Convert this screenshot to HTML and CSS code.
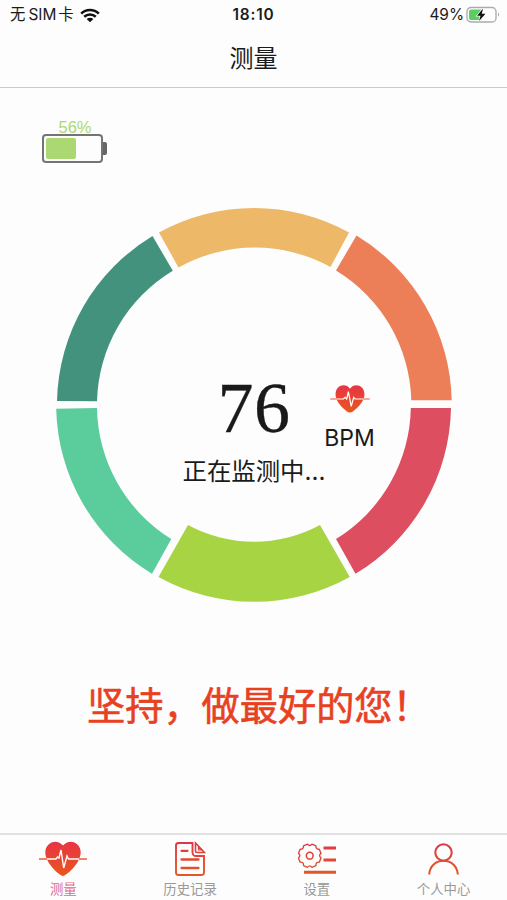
FILE: index.html
```html
<!DOCTYPE html>
<html lang="zh-CN">
<head>
    <meta charset="UTF-8">
    <meta name="viewport" content="width=device-width, initial-scale=1.0">
    <title>测量</title>
    <link rel="stylesheet" href="styles.css">
</head>
<body>
    <div class="status-bar">
        <div class="carrier">
            <span>无</span><span class="sim">SIM</span><span>卡</span>
            <svg class="wifi" width="20" height="15" viewBox="0 0 20 15">
                <path d="M1.2 5.6C6.1.8 13.9.8 18.8 5.6M4.2 8.8c3.3-3.1 8.3-3.1 11.6 0" fill="none" stroke="#111" stroke-width="2.6"/>
                <path d="M6.6 10.9c2-1.7 4.8-1.7 6.8 0L10 14.2z" fill="#111"/>
            </svg>
        </div>
        <div class="time">18:10</div>
        <div class="power">
            <span>49%</span>
            <svg width="34" height="18" viewBox="0 0 34 18">
                <rect x="1" y="1.5" width="29" height="14.5" rx="4" fill="#fff" stroke="#aaa" stroke-width="1.3"/>
                <path d="M32 6.7c1.5.6 1.5 3.2 0 3.8z" fill="#aaa"/>
                <path d="M5 3.5h10.500v10.500H5a2 2 0 0 1-2-2v-6.500a2 2 0 0 1 2-2z" fill="#5bcb62"/>
                <path d="M17 2.500L11 9.700h3.500l-1.500 5.200 6.500-7.200h-3.700z" fill="#111" stroke="#fff" stroke-width="1.4" paint-order="stroke"/>
            </svg>
        </div>
    </div>
    <header class="title">测量</header>

    <main>
        <div class="device-battery">
            <div class="battery-text">56%</div>
            <div class="battery">
                <div class="battery-body"><div class="battery-level" style="width: 56%"></div></div>
                <div class="battery-cap"></div>
            </div>
        </div>

        <div class="gauge">
            <svg class="ring" width="400" height="400" viewBox="54 204 400 400">
                <path fill="#edb868" d="M159 232.500A196.500 196.500 0 0 1 349 232.500L330.500 267A156.800 156.800 0 0 0 178.500 267.500Z"/>
                <path fill="#ec7f58" d="M356.500 235.500A197.500 197.500 0 0 1 451.700 400.300H411.300A156.800 156.800 0 0 0 336 270.500Z"/>
                <path fill="#dd4f60" d="M451 408A197.500 197.500 0 0 1 355.500 573.800L336 539A156.800 156.800 0 0 0 410.800 408Z"/>
                <path fill="#a7d443" d="M349.800 577A197.500 197.500 0 0 1 158.500 577L188 525A139 139 0 0 0 320 525Z"/>
                <path fill="#5bcc9b" d="M152 573.700A197.500 197.500 0 0 1 56.200 408.700L97 408A156.800 156.800 0 0 0 171.300 539Z"/>
                <path fill="#42927d" d="M57 401A197.500 197.500 0 0 1 152.500 236L172.800 270.800A156.800 156.800 0 0 0 97 401.200Z"/>
            </svg>
            <div class="readout">
                <div class="rate">
                    <div class="bpm-value">76</div>
                    <div class="bpm-unit">
                        <svg width="40" height="28" viewBox="0 0 48 34">
                            <path d="M24 33.500C20 33 7 22 6.500 12 6 0 19-3 24 4.500 29-3 42 0 41.500 12 41 22 28 33 24 33.500z" fill="url(#red)"/>
                            <path d="M6 17h10l2-2 2 2 2-9 3.500 18 3-11 1.500 2h12" fill="none" stroke="#fff" stroke-width="1.500"/>
                            <path d="M0 17h8m32 0h8" stroke="#ea5b35" stroke-width="1.500"/>
                        </svg>
                        <span>BPM</span>
                    </div>
                </div>
                <div class="state">正在监测中...</div>
            </div>
        </div>

        <div class="slogan">坚持，做最好的您！</div>
    </main>

    <nav class="tab-bar">
        <a class="tab active">
            <svg width="48" height="36" viewBox="0 0 48 36">
                <defs>
                    <linearGradient id="red" x1="0" y1="0" x2="0" y2="1">
                        <stop offset="0" stop-color="#e73545"/>
                        <stop offset="1" stop-color="#e9561d"/>
                    </linearGradient>
                    <linearGradient id="line" gradientUnits="userSpaceOnUse" x1="0" y1="0" x2="0" y2="36">
                        <stop offset="0" stop-color="#df3549"/>
                        <stop offset="1" stop-color="#e45b20"/>
                    </linearGradient>
                </defs>
                <path d="M24 35C20 34 7 23 6.300 12 6 1 18-3 24 4.500 30-3 42 1 41.700 12 41 23 28 34 24 35z" fill="url(#red)"/>
                <path d="M6 18h11l1.500-2 1.500 1 2-8 2.700 18 3.300-12 1.500 3h12" fill="none" stroke="#fff" stroke-width="1.400"/>
                <path d="M0 18h8m32 0h8" stroke="#ea5b35" stroke-width="1.500"/>
            </svg>
            <span>测量</span>
        </a>
        <a class="tab">
            <svg width="32" height="36" viewBox="0 0 32 36" fill="none" stroke="url(#line)" stroke-width="1.900">
                <path d="M18.500 2H4.500A2.500 2.500 0 0 0 2 4.500v27A2.500 2.500 0 0 0 4.500 34h23a2.500 2.500 0 0 0 2.500-2.500V15h-8a3.500 3.500 0 0 1-3.500-3.500z"/>
                <path d="M21.500 2V10q0 1.500 1.500 1.500H30.500z" stroke-width="1.600"/>
                <path d="M24.500 6v3h3z" stroke-width="1.200"/>
                <path d="M7.500 9.800h6M7.500 18.500h17M7.500 27h17" stroke-width="2.300" stroke-linecap="round"/>
            </svg>
            <span>历史记录</span>
        </a>
        <a class="tab">
            <svg width="38" height="36" viewBox="0 0 38 36" fill="none" stroke="url(#line)">
                <g transform="translate(-2.400 -.8) scale(1.130)">
                    <path stroke-width="1.200" stroke-linejoin="round" d="M10.500 3.500q2 2.400 4 0l3.500 1.500q-.2 3.300 3 3l1.500 3.700q-2.600 1.900 0 4L21 19.400q-3.200-.3-3 3L14.500 24q-2-2.500-4 0L7 22.400q.2-3.300-3-3l-1.500-3.700q2.600-2.100 0-4L4 8q3.200.3 3-3z"/>
                    <circle cx="12.500" cy="13.700" r="3" stroke-width="1.400"/>
                </g>
                <path d="M25.500 5.400h12.500v3H25.500zM25.500 17.500h12.500v3H25.500zM6 29.700H38v3H6z" fill="url(#line)" stroke="none"/>
            </svg>
            <span>设置</span>
        </a>
        <a class="tab">
            <svg width="32" height="36" viewBox="0 0 32 36" fill="none" stroke="url(#line)" stroke-width="2.100">
                <circle cx="15.500" cy="11.500" r="8.200"/>
                <path d="M1.200 33.500c1-18.300 27.600-18.300 28.600 0"/>
            </svg>
            <span>个人中心</span>
        </a>
    </nav>
</body>
</html>
```

FILE: styles.css
```css
* {
    box-sizing: border-box;
}
body {
    margin: 0;
    height: 900px;
    display: flex;
    flex-direction: column;
    overflow: hidden;
    background-color: #fdfdfd;
    color: #1a1a1a;
    font-family: Inter, "Noto Sans CJK SC", sans-serif;
}
svg {
    display: block;
}
.status-bar {
    height: 30px;
    padding: 0 7px 0 10px;
    display: grid;
    grid-template-columns: 1fr auto 1fr;
    align-items: center;
    font-size: 15.4px;
    line-height: 30px;
}
.carrier {
    display: flex;
    align-items: center;
}
.sim {
    margin: 0 2px 0 3px;
}
.wifi {
    margin-left: 6px;
}
.time {
    margin-right: 3px;
    font-weight: 600;
    letter-spacing: 0.8px;
}
.power {
    display: flex;
    justify-content: flex-end;
    align-items: center;
    gap: 2px;
}
.title {
    height: 58px;
    border-bottom: 1px solid #ccc;
    text-align: center;
    font-size: 24px;
    line-height: 57px;
}
main {
    flex: 1;
    display: flex;
    flex-direction: column;
}
.device-battery {
    margin: 31px 0 0 42px;
    width: 66px;
}
.battery-text {
    color: #abd873;
    font-size: 16.5px;
    line-height: 16px;
    height: 15px;
    font-family: "Liberation Sans", sans-serif;
    text-align: center;
}
.battery {
    display: flex;
    align-items: center;
}
.battery-body {
    width: 61px;
    height: 29px;
    padding: 2px;
    border: 2px solid #747474;
    border-radius: 4px;
}
.battery-level {
    height: 100%;
    background-color: #abd873;
    border-radius: 2px;
}
.battery-cap {
    width: 4px;
    height: 13px;
    background-color: #666;
    border-radius: 0 2px 2px 0;
}
.gauge {
    margin-top: 41px;
    display: grid;
    justify-content: center;
}
.ring, .readout {
    grid-area: 1 / 1;
}
.readout {
    padding-top: 168px;
}
.rate {
    display: flex;
    padding-left: 164px;
}
.bpm-value {
    width: 107px;
    font-family: "Liberation Serif", serif;
    font-size: 72px;
    line-height: 72px;
    letter-spacing: 0.5px;
    -webkit-text-stroke: 0.3px #1a1a1a;
}
.bpm-unit {
    display: flex;
    flex-direction: column;
    align-items: center;
    width: 50px;
    padding-top: 13px;
    font-size: 23px;
    line-height: 28px;
}
.bpm-unit span {
    margin-top: 11px;
}
.state {
    padding-left: 129px;
    margin-top: 1px;
    font-size: 24.4px;
    line-height: 36px;
}
.slogan {
    margin: 74px 0 0 87px;
    color: #e8411f;
    font-size: 38.2px;
    line-height: 56px;
    -webkit-text-stroke: 0.6px #e8411f;
}
.tab-bar {
    height: 67px;
    border-top: 2px solid #e0e0e0;
    display: grid;
    grid-template-columns: repeat(4, 1fr);
}
.tab {
    display: flex;
    flex-direction: column;
    align-items: center;
    padding-top: 6px;
    color: #999;
    font-size: 13.4px;
    line-height: 25px;
}
.tab.active {
    color: #df6b85;
}
```
